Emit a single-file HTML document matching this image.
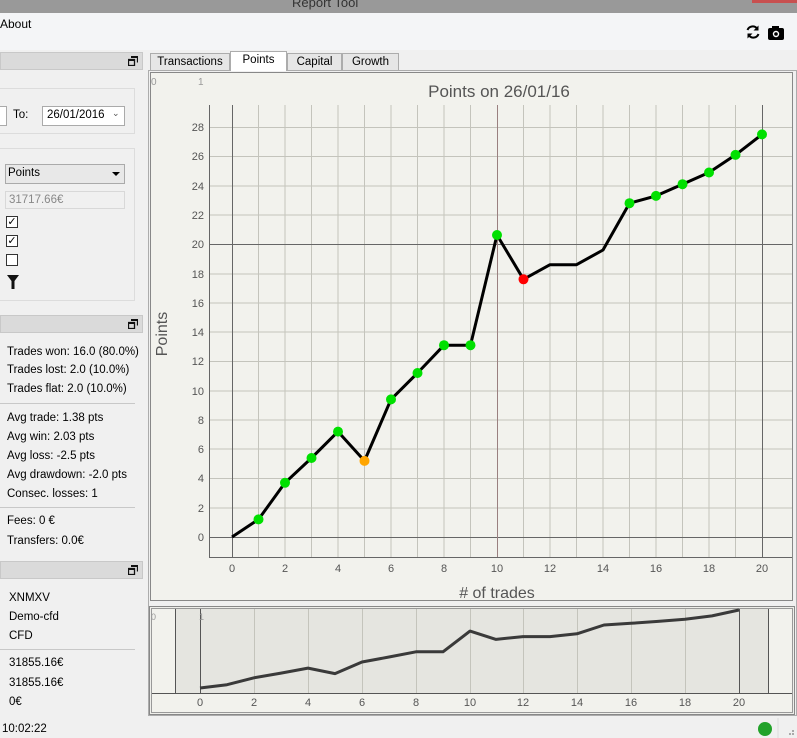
<!DOCTYPE html>
<html><head><meta charset="utf-8"><style>
*{margin:0;padding:0;box-sizing:border-box}
body{width:797px;height:738px;overflow:hidden;background:#f0f0f0;font-family:"Liberation Sans","DejaVu Sans",sans-serif;font-size:11.5px;color:#000;position:relative}
.a{position:absolute}
.t{position:absolute;white-space:nowrap;font-size:11.5px}
.dock{position:absolute;left:0;width:143px;height:18px;background:#dadada;border:1px solid #c8c8c8}
.dock svg{position:absolute;right:4px;top:3px}
.sep{position:absolute;left:0;width:135px;height:1px;background:#c8c8c8}
.cb{position:absolute;left:6px;width:12px;height:12px;border:1px solid #333;background:#fff;font-size:11px;line-height:10px;text-align:center;font-weight:bold}
.tab{position:absolute;top:53px;height:18px;border:1px solid #acacac;background:#e6e6e6;font-size:11.5px;text-align:center;line-height:17px}
</style></head><body>
<div class="a" style="left:0;top:0;width:797px;height:13px;background:#999"></div>
<div class="t" style="left:292px;top:-5px;font-size:13px;color:#333">Report Tool</div>
<div class="a" style="left:752px;top:0;width:45px;height:3px;background:#c85050"></div>
<div class="a" style="left:0;top:13px;width:797px;height:37px;background:#f4f5f7"></div>
<div class="t" style="left:0;top:17px;font-size:12px">About</div>
<svg class="a" style="left:744px;top:23px" width="40" height="18" viewBox="0 0 40 18">
<path d="M3.5 7 A5.5 5.5 0 0 1 13 5.5" fill="none" stroke="#000" stroke-width="2"/><path d="M14.5 2.5 L14.5 7.5 L9.5 7.5Z" fill="#000"/>
<path d="M14.5 11 A5.5 5.5 0 0 1 5 12.5" fill="none" stroke="#000" stroke-width="2"/><path d="M3.5 15.5 L3.5 10.5 L8.5 10.5Z" fill="#000"/>
<rect x="24" y="5" width="16" height="12" rx="2" fill="#000"/><rect x="28" y="3" width="7" height="4" fill="#000"/><circle cx="32" cy="11" r="3.2" fill="#fff"/><circle cx="32" cy="11" r="1.8" fill="#000"/>
</svg>

<!-- left panel -->
<div class="dock" style="top:52px"><svg width="10" height="10"><path d="M3 0.5H9.5V6.5M0.5 3.5H6.5V9.5H0.5Z" fill="none" stroke="#111" stroke-width="1.3"/><path d="M3 1H9.5M0.5 4H6.5" stroke="#111" stroke-width="2"/></svg></div>
<div class="a" style="left:-2px;top:88px;width:137px;height:46px;border:1px solid #dcdcdc"></div>
<div class="a" style="left:-3px;top:106px;width:10px;height:20px;border:1px solid #aaa;background:#fff"></div>
<div class="t" style="left:13px;top:109px">To:</div>
<div class="a" style="left:42px;top:106px;width:83px;height:20px;border:1px solid #aaa;background:#fff"></div>
<div class="t" style="left:47px;top:109px">26/01/2016</div>
<div class="t" style="left:112px;top:108px;font-size:9px;color:#555">&#8964;</div>
<div class="a" style="left:-2px;top:148px;width:137px;height:153px;border:1px solid #dcdcdc"></div>
<div class="a" style="left:5px;top:164px;width:120px;height:20px;border:1px solid #aaa;background:#e8e8e8"></div>
<div class="t" style="left:8px;top:167px">Points</div>
<div class="a" style="left:112px;top:172px;border-left:4px solid transparent;border-right:4px solid transparent;border-top:4px solid #000"></div>
<div class="a" style="left:5px;top:191px;width:120px;height:18px;border:1px solid #d8d8d8;background:#f0f0f0"></div>
<div class="t" style="left:9px;top:194px;color:#888">31717.66€</div>
<div class="cb" style="top:216px">✓</div>
<div class="cb" style="top:235px">✓</div>
<div class="cb" style="top:254px"></div>
<svg class="a" style="left:7px;top:275px" width="12" height="14"><path d="M0 0H12L7.5 6V14H4.5V6Z" fill="#111"/></svg>

<div class="dock" style="top:315px"><svg width="10" height="10"><path d="M3 0.5H9.5V6.5M0.5 3.5H6.5V9.5H0.5Z" fill="none" stroke="#111" stroke-width="1.3"/><path d="M3 1H9.5M0.5 4H6.5" stroke="#111" stroke-width="2"/></svg></div>
<div class="t" style="left:7px;top:346px">Trades won: 16.0 (80.0%)</div>
<div class="t" style="left:7px;top:364px">Trades lost: 2.0 (10.0%)</div>
<div class="t" style="left:7px;top:383px">Trades flat: 2.0 (10.0%)</div>
<div class="sep" style="top:403px"></div>
<div class="t" style="left:7px;top:412px">Avg trade: 1.38 pts</div>
<div class="t" style="left:7px;top:431px">Avg win: 2.03 pts</div>
<div class="t" style="left:7px;top:450px">Avg loss: -2.5 pts</div>
<div class="t" style="left:7px;top:469px">Avg drawdown: -2.0 pts</div>
<div class="t" style="left:7px;top:488px">Consec. losses: 1</div>
<div class="sep" style="top:507px"></div>
<div class="t" style="left:7px;top:515px">Fees: 0 €</div>
<div class="t" style="left:7px;top:535px">Transfers: 0.0€</div>
<div class="dock" style="top:561px"><svg width="10" height="10"><path d="M3 0.5H9.5V6.5M0.5 3.5H6.5V9.5H0.5Z" fill="none" stroke="#111" stroke-width="1.3"/><path d="M3 1H9.5M0.5 4H6.5" stroke="#111" stroke-width="2"/></svg></div>
<div class="t" style="left:9px;top:592px">XNMXV</div>
<div class="t" style="left:9px;top:611px">Demo-cfd</div>
<div class="t" style="left:9px;top:630px">CFD</div>
<div class="sep" style="top:649px"></div>
<div class="t" style="left:9px;top:657px">31855.16€</div>
<div class="t" style="left:9px;top:677px">31855.16€</div>
<div class="t" style="left:9px;top:696px">0€</div>
<div class="t" style="left:2px;top:723px">10:02:22</div>

<!-- tabs -->
<div class="a" style="left:148px;top:70px;width:649px;height:646px;border:1px solid #acacac;background:#f0f0f0"></div>
<div class="tab" style="left:150px;width:80px">Transactions</div>
<div class="tab" style="left:230px;top:51px;height:20px;width:57px;background:#fff;border-bottom:none">Points</div>
<div class="tab" style="left:287px;width:55px">Capital</div>
<div class="tab" style="left:342px;width:57px">Growth</div>

<svg class="a" style="left:0;top:0" width="797" height="738" viewBox="0 0 797 738" font-family="Liberation Sans, sans-serif">
<rect x="150.5" y="72.5" width="642" height="528" fill="#f2f2ed" stroke="#888"/>
<text x="151" y="85" font-size="10" fill="#999">0</text><text x="198" y="85" font-size="10" fill="#999">1</text>
<text x="499" y="97" font-size="17" fill="#555" text-anchor="middle">Points on 26/01/16</text>
<g stroke="#c4c4bc" stroke-width="1">
<path d="M258.5 105V557M311.5 105V557M364.5 105V557M417.5 105V557M444 105V557M470.5 105V557M523.5 105V557M550 105V557M576.5 105V557M603 105V557M629.5 105V557M656 105V557M682.5 105V557M709 105V557M735.5 105V557"/>
<path d="M285 105V557M338 105V557M391 105V557M656 105V557M709 105V557"/>
<path d="M209 127.5H792M209 156.5H792M209 186H792M209 215H792M209 274H792M209 303H792M209 332H792M209 361.5H792M209 391H792M209 420H792M209 449H792M209 478.5H792M209 508H792"/>
</g>
<g stroke="#666" stroke-width="1">
<path d="M232.5 105V557M762.5 105V557M209.5 105V557M209 557.5H792M209 244.5H792M209 537.5H792"/>
<path d="M497.5 105V557" stroke="#9a8080"/>
</g>
<g font-size="11" fill="#555" text-anchor="end">
<text x="204" y="131">28</text><text x="204" y="160">26</text><text x="204" y="190">24</text><text x="204" y="219">22</text><text x="204" y="248">20</text><text x="204" y="278">18</text><text x="204" y="307">16</text><text x="204" y="336">14</text><text x="204" y="365">12</text><text x="204" y="395">10</text><text x="204" y="424">8</text><text x="204" y="453">6</text><text x="204" y="482">4</text><text x="204" y="512">2</text><text x="204" y="541">0</text>
</g>
<g font-size="11" fill="#555" text-anchor="middle">
<text x="232" y="572">0</text><text x="285" y="572">2</text><text x="338" y="572">4</text><text x="391" y="572">6</text><text x="444" y="572">8</text><text x="497" y="572">10</text><text x="550" y="572">12</text><text x="603" y="572">14</text><text x="656" y="572">16</text><text x="709" y="572">18</text><text x="762" y="572">20</text>
</g>
<text x="497" y="598" font-size="16" fill="#555" text-anchor="middle"># of trades</text>
<text transform="translate(167 334) rotate(-90)" font-size="16" fill="#555" text-anchor="middle">Points</text>
<polyline fill="none" stroke="#000" stroke-width="3" stroke-linejoin="round" points="232,537 258.5,519.4 285,482.8 311.5,458 338,431.6 364.5,460.9 391,399.4 417.5,373 444,345.2 470.5,345.2 497,235 523.5,279.3 550,264.7 576.5,264.7 603,250 629.5,203.2 656,195.9 682.5,184.2 709,172.5 735.5,154.9 762,134.4"/>
<g fill="#00e000">
<circle cx="258.5" cy="519.4" r="5"/><circle cx="285" cy="482.8" r="5"/><circle cx="311.5" cy="458" r="5"/><circle cx="338" cy="431.6" r="5"/><circle cx="391" cy="399.4" r="5"/><circle cx="417.5" cy="373" r="5"/><circle cx="444" cy="345.2" r="5"/><circle cx="470.5" cy="345.2" r="5"/><circle cx="497" cy="235" r="5"/><circle cx="629.5" cy="203.2" r="5"/><circle cx="656" cy="195.9" r="5"/><circle cx="682.5" cy="184.2" r="5"/><circle cx="709" cy="172.5" r="5"/><circle cx="735.5" cy="154.9" r="5"/><circle cx="762" cy="134.4" r="5"/>
</g>
<circle cx="364.5" cy="460.9" r="5" fill="#ffa500"/>
<circle cx="523.5" cy="279.3" r="5" fill="#ff0000"/>

<!-- mini chart -->
<rect x="149.5" y="606.5" width="645" height="108" fill="#eeeeea" stroke="#888"/>
<rect x="151.5" y="608.5" width="641" height="104" fill="#f2f2ed" stroke="#999"/>
<rect x="176" y="609" width="592" height="84" fill="#e5e5e0"/>
<g stroke="#c4c4bc"><path d="M254.5 609V693M308.5 609V693M362.5 609V693M416.5 609V693M470.5 609V693M523.5 609V693M577.5 609V693M631.5 609V693M685.5 609V693"/></g>
<g stroke="#555"><path d="M175.5 609V693M768.5 609V693M200.5 609V693M739.5 609V693M152 693.5H792"/></g>
<text x="151" y="620" font-size="9" fill="#999">0</text><text x="199" y="620" font-size="9" fill="#999">1</text>
<g font-size="11" fill="#555" text-anchor="middle">
<text x="200" y="706">0</text><text x="254" y="706">2</text><text x="308" y="706">4</text><text x="362" y="706">6</text><text x="416" y="706">8</text><text x="470" y="706">10</text><text x="523" y="706">12</text><text x="577" y="706">14</text><text x="631" y="706">16</text><text x="685" y="706">18</text><text x="739" y="706">20</text>
</g>
<polyline fill="none" stroke="#3a3a3a" stroke-width="3" stroke-linejoin="round" points="200,688 227,684.7 254,677.8 281,673.1 308,668.1 335,673.6 362,662 389,657 416,651.8 443,651.8 470,631.1 496,639.4 523,636.6 550,636.6 577,633.8 604,625 631,623.3 658,621.4 685,619.2 712,615.9 739,610"/>
<circle cx="765" cy="729" r="7" fill="#22a22a"/>
<path d="M778 718V738" stroke="#ddd"/>
<g fill="#aaa"><rect x="789" y="733" width="2" height="2"/><rect x="792" y="730" width="2" height="2"/><rect x="792" y="733" width="2" height="2"/></g>
</svg>
</body></html>
